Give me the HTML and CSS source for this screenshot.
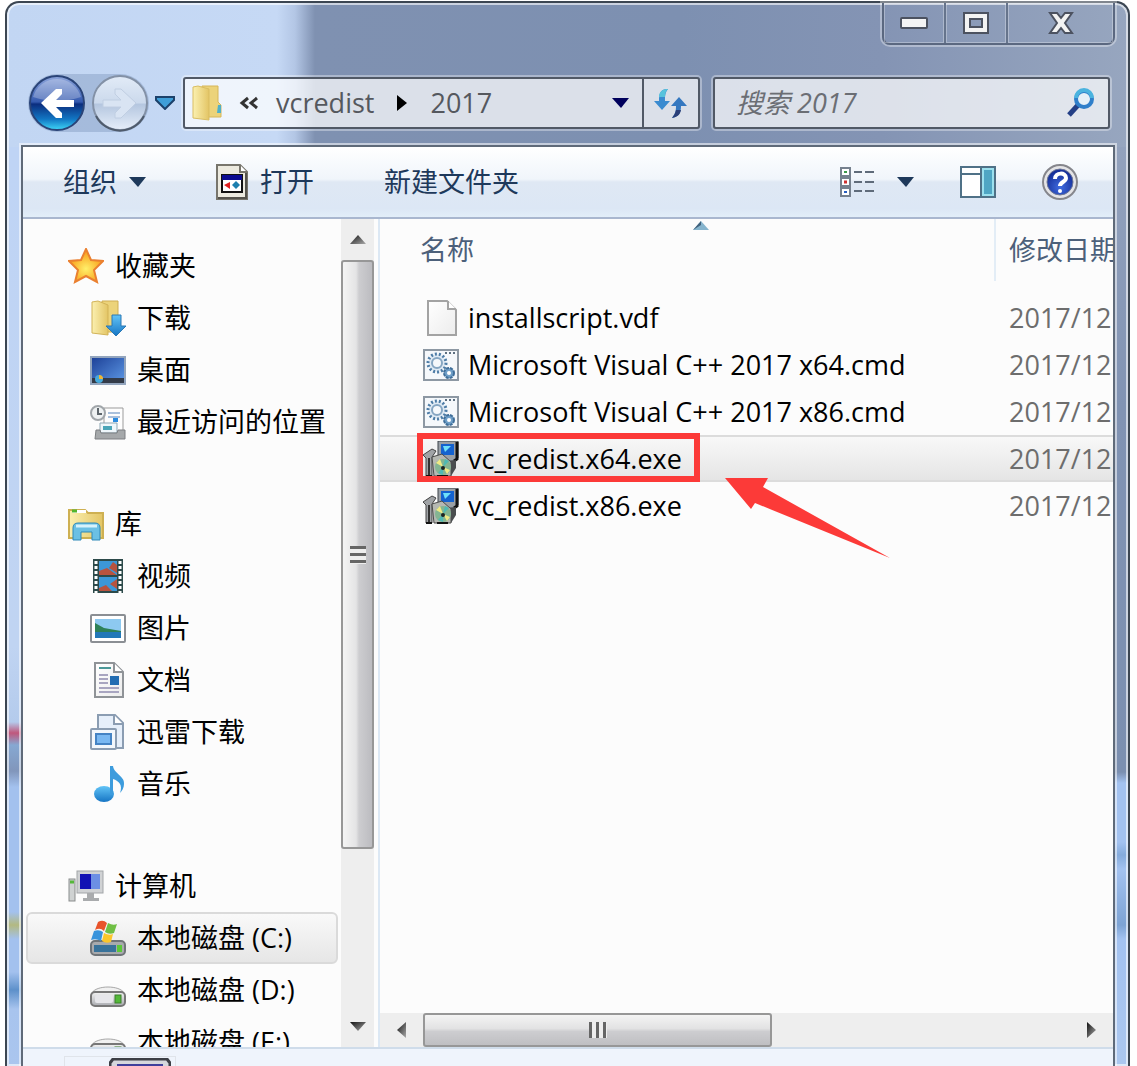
FILE: index.html
```html
<!DOCTYPE html>
<html lang="zh-CN">
<head>
    <meta charset="UTF-8">
    <meta name="viewport" content="width=device-width, initial-scale=1.0">
    <title>2017</title>
    <link rel="stylesheet" href="styles.css">
</head>
<body>
    <svg class="defs" aria-hidden="true">
        <defs>
            <linearGradient id="gFolder" x1="0" y1="0" x2="1" y2="0">
                <stop offset="0" stop-color="#fbf0b0"/><stop offset="1" stop-color="#e3c565"/>
            </linearGradient>
            <linearGradient id="gBlue" x1="0" y1="0" x2="0" y2="1">
                <stop offset="0" stop-color="#62c4f7"/><stop offset="1" stop-color="#1675c4"/>
            </linearGradient>
            <linearGradient id="gGrey" x1="0" y1="0" x2="0" y2="1">
                <stop offset="0" stop-color="#f4f4f4"/><stop offset="1" stop-color="#a9abb0"/>
            </linearGradient>
            <linearGradient id="gScreen" x1="0" y1="0" x2="1" y2="1">
                <stop offset="0" stop-color="#1c3f96"/><stop offset="1" stop-color="#5f9be8"/>
            </linearGradient>
            <linearGradient id="gPaper" x1="0" y1="0" x2="1" y2="1">
                <stop offset="0" stop-color="#ffffff"/><stop offset="1" stop-color="#ececec"/>
            </linearGradient>
            <linearGradient id="gBack" x1="0" y1="0" x2="0" y2="1">
                <stop offset="0" stop-color="#8ea6dc"/><stop offset=".48" stop-color="#3459ae"/>
                <stop offset=".52" stop-color="#0b2d7e"/><stop offset=".8" stop-color="#1277c4"/><stop offset="1" stop-color="#3fd8f8"/>
            </linearGradient>
            <linearGradient id="gFwd" x1="0" y1="0" x2="0" y2="1">
                <stop offset="0" stop-color="#e2ebf7"/><stop offset=".5" stop-color="#cbd9ec"/>
                <stop offset=".52" stop-color="#b4c6df"/><stop offset="1" stop-color="#e6eefa"/>
            </linearGradient>
            <linearGradient id="gArrow" x1="0" y1="0" x2="1" y2="1">
                <stop offset="0" stop-color="#111111"/><stop offset="1" stop-color="#aaaaaa"/>
            </linearGradient>
            <radialGradient id="gHelp" cx=".5" cy=".7" r=".6">
                <stop offset="0" stop-color="#3f6be0"/><stop offset="1" stop-color="#16309a"/>
            </radialGradient>
            <radialGradient id="gStar" cx=".5" cy=".6" r=".5">
                <stop offset="0" stop-color="#fff06a"/><stop offset="1" stop-color="#f9a11d"/>
            </radialGradient>
        </defs>
        <symbol id="cmd" viewBox="0 0 36 36">
            <rect x="1" y="3" width="34" height="30" fill="#f5f8fb" stroke="#8d98a3" stroke-width="2"/>
            <path d="M22 6h2M26 6h2M30 6h2" stroke="#5d6f80" stroke-width="2"/>
            <circle cx="14" cy="16" r="9" fill="#dfeaf4" stroke="#4d7ca6" stroke-width="3" stroke-dasharray="2 2"/>
            <circle cx="14" cy="16" r="5" fill="#f5f8fb" stroke="#86a6c2" stroke-width="2"/>
            <circle cx="26" cy="26" r="5" fill="#6f9fc8" stroke="#3f6e99" stroke-width="2" stroke-dasharray="3 1"/>
            <circle cx="26" cy="26" r="2" fill="#fff"/>
        </symbol>
        <symbol id="setup" viewBox="0 0 36 36">
            <path d="M15 0h20v17l-4 3H15z" fill="#9aa0a6" stroke="#3c4248" stroke-width="1"/>
            <path d="M34 1v17l-3 2" fill="none" stroke="#111" stroke-width="3"/>
            <rect x="18" y="3" width="13" height="11" fill="#1462cf"/>
            <path d="M20 5h8l-6 6z" fill="#6ee0fa"/>
            <path d="M0 14l9-6 4 2-4 6v19H3V17z" fill="#a0a3a6" stroke="#444" stroke-width="1"/>
            <path d="M6 17v17" stroke="#333" stroke-width="2"/>
            <path d="M9 16l10-3 9 8v14H11z" fill="#b5b8b2" stroke="#4b4b4b" stroke-width="1"/>
            <circle cx="20" cy="26" r="8" fill="#84b592"/>
            <path d="M20 26l-7-4 4-4zM20 26l7 3-3 4z" fill="#f0e985"/>
            <path d="M20 26l-5 6 5 2zM20 26l2-8 4 2z" fill="#4fb9b3"/>
            <circle cx="20" cy="27" r="2" fill="#1d2320"/>
            <path d="M28 20l5-1v8l-5 8" fill="#4a4d4f"/>
            <path d="M3 35h6M14 35h11" stroke="#111" stroke-width="2"/>
        </symbol>
        <symbol id="drive" viewBox="0 0 36 36">
            <path d="M2 21c4-8 28-8 32 0z" fill="#f1f1f1" stroke="#a7a7a7" stroke-width="1"/>
            <rect x="1" y="20" width="34" height="14" rx="4" fill="url(#gGrey)" stroke="#777" stroke-width="2"/>
            <rect x="5" y="23" width="18" height="8" rx="2" fill="#e6e6ea"/>
            <rect x="25" y="23" width="6" height="8" fill="#53b838" stroke="#3b7e2a" stroke-width="1"/>
        </symbol>
    </svg>

    <div class="window">
        <div class="controls">
            <button aria-label="最小化"><svg width="28" height="12" viewBox="0 0 28 12"><rect x="1" y="1" width="26" height="10" rx="1" fill="#f3f3f3" stroke="#4c5260" stroke-width="2"/></svg></button>
            <button aria-label="最大化"><svg width="28" height="22" viewBox="0 0 28 22"><path fill-rule="evenodd" d="M2 1h24v20H2zM8 7v8h12V7z" fill="#f3f3f3" stroke="#4c5260" stroke-width="2"/></svg></button>
            <button class="close" aria-label="关闭"><svg width="26" height="22" viewBox="0 0 26 22"><path d="M2 1h7l4 5 4-5h7l-7 10 7 10h-7l-4-5-4 5H2l7-10z" fill="#f3f3f3" stroke="#4c5260" stroke-width="2"/></svg></button>
        </div>

        <div class="nav">
            <div class="pod">
                <button aria-label="后退"><svg width="58" height="58" viewBox="0 0 58 58">
                    <circle cx="29" cy="29" r="27" fill="url(#gBack)" stroke="#2a4478" stroke-width="2"/>
                    <path d="M5 23A25 25 0 0 1 53 23Q29 31 5 23z" fill="#fff" opacity=".25"/>
                    <path d="M13 29L28 15h6v5l-6 6h18v7H28l6 6v5h-6z" fill="#fff"/>
                </svg></button>
                <button aria-label="前进"><svg width="58" height="58" viewBox="0 0 58 58">
                    <circle cx="29" cy="29" r="27" fill="url(#gFwd)" stroke="#8391a6" stroke-width="2"/>
                    <path d="M5 42A27 27 0 0 0 53 42" fill="none" stroke="#4f5b6c" stroke-width="2"/>
                    <path d="M45 29L30 15h-6v5l6 6H12v7h18l-6 6v5h6z" fill="#d9e4f3" stroke="#c0cee2" stroke-width="1"/>
                </svg></button>
            </div>
            <button class="recent" aria-label="最近的页面"><svg width="20" height="14" viewBox="0 0 20 14"><path d="M1 1h18v3l-9 9-9-9z" fill="#3f9ed8" stroke="#1c416b" stroke-width="2"/></svg></button>

            <div class="address">
                <svg class="folder" width="30" height="36" viewBox="0 0 30 36">
                    <path d="M10 1h16v16l3 3v12H10z" fill="#ecd37a" stroke="#d6b658" stroke-width="1"/>
                    <path d="M1 2l5-1 11 3v31L1 33z" fill="url(#gFolder)" stroke="#d9bd62" stroke-width="1"/>
                    <path d="M26 20h3v8h-4z" fill="#4fb0c8"/>
                </svg>
                <svg class="chevrons" width="20" height="14" viewBox="0 0 20 14"><path d="M9 2L3 7l6 5M18 2l-6 5 6 5" fill="none" stroke="#333" stroke-width="3"/></svg>
                <a href="#">vcredist</a>
                <svg width="10" height="18" viewBox="0 0 10 18"><path d="M0 1l10 8-10 8z" fill="#000"/></svg>
                <a href="#">2017</a>
                <button class="history" aria-label="以前的位置"><svg width="17" height="10" viewBox="0 0 17 10"><path d="M0 0h17L9 10z" fill="#00005c"/></svg></button>
                <button class="refresh" aria-label="刷新"><svg width="34" height="32" viewBox="0 0 34 32">
                    <path d="M12 2C6 3 5 7 5 14H0l8 9 8-9h-5c0-5 0-8 3-12z" fill="#3a8bd0"/>
                    <path d="M12 2C7 3 5 6 5 10h6c0-4 1-6 3-8z" fill="#58c3dc"/>
                    <path d="M18 31c6-1 9-4 9-12h6l-8-9-8 9h5c0 6-1 8-4 12z" fill="#3578c0"/>
                    <path d="M18 31c5-1 8-3 9-8h-5c-1 4-2 5-4 8z" fill="#2b3f78"/>
                </svg></button>
            </div>

            <div class="search">
                <input type="text" placeholder="搜索 2017" aria-label="搜索 2017">
                <svg width="28" height="30" viewBox="0 0 28 30">
                    <path d="M2 27l10-11" stroke="#243f86" stroke-width="5"/>
                    <circle cx="17" cy="11" r="8" fill="#e5f0f8" stroke="#2f7fca" stroke-width="4"/>
                    <path d="M9 10a8 8 0 0 1 16 0" fill="none" stroke="#4ab3df" stroke-width="4"/>
                </svg>
            </div>
        </div>

        <div class="client">
            <div class="toolbar">
                <button>组织 <svg width="17" height="10" viewBox="0 0 17 10"><path d="M0 0h17L9 10z" fill="#1e395b"/></svg></button>
                <button>
                    <svg width="32" height="36" viewBox="0 0 32 36">
                        <path d="M1 1h23l7 7v27H1z" fill="#eceadf" stroke="#77756c" stroke-width="2"/>
                        <path d="M24 1v7h7" fill="#fff" stroke="#77756c" stroke-width="2"/>
                        <path d="M30 9v25H2" fill="none" stroke="#55534c" stroke-width="2"/>
                        <rect x="6" y="11" width="20" height="17" fill="#fff" stroke="#111" stroke-width="2"/>
                        <rect x="6" y="11" width="20" height="5" fill="#0b0b90"/>
                        <path d="M14 18v7l-6-4z" fill="#e02020"/><path d="M20 17l4 4-4 4-4-4z" fill="#1c7fae"/>
                    </svg>
                    打开
                </button>
                <button>新建文件夹</button>
                <div class="tools">
                    <button class="views" aria-label="更改您的视图">
                        <svg width="34" height="30" viewBox="0 0 34 30">
                            <path d="M1 1h9v8H1zM1 11h9v8H1zM1 21h9v8H1z" fill="#fff" stroke="#76818e" stroke-width="2"/>
                            <path d="M4 5h3" stroke="#3c9a4a" stroke-width="2"/><path d="M4 15h3" stroke="#d03030" stroke-width="3"/><path d="M4 25h3" stroke="#2a5fc0" stroke-width="2"/>
                            <path d="M14 5h8M25 5h9M14 15h8M25 15h9M14 24h8M25 24h9" stroke="#5f6b7a" stroke-width="2"/>
                        </svg>
                        <svg width="17" height="10" viewBox="0 0 17 10"><path d="M0 0h17L9 10z" fill="#1e395b"/></svg>
                    </button>
                    <button aria-label="显示预览窗格"><svg width="36" height="32" viewBox="0 0 36 32">
                        <rect x="1" y="1" width="34" height="30" fill="#fff" stroke="#4f7187" stroke-width="2"/>
                        <path d="M2 8h19M21 1v30" stroke="#4f7187" stroke-width="2"/>
                        <rect x="23" y="3" width="10" height="26" fill="#4fa6c4" stroke="#9be0ee" stroke-width="2"/>
                    </svg></button>
                    <button aria-label="获取帮助"><svg width="36" height="36" viewBox="0 0 36 36">
                        <circle cx="18" cy="18" r="17" fill="#e4e4e6" stroke="#85868c" stroke-width="2"/>
                        <circle cx="18" cy="18" r="13" fill="url(#gHelp)" stroke="#6c7696" stroke-width="1"/>
                        <path d="M13 15c0-7 11-7 11-1 0 4-6 4-6 8" fill="none" stroke="#fff" stroke-width="4"/>
                        <circle cx="18" cy="27" r="2" fill="#fff"/>
                    </svg></button>
                </div>
            </div>

            <div class="content">
                <nav class="sidebar">
                    <ul>
                        <li><a href="#"><svg viewBox="0 0 36 36"><path d="M18 1l5 11 12 1-9 9 3 12-11-6-11 6 3-12-9-9 12-1z" fill="url(#gStar)" stroke="#ea8030" stroke-width="2"/></svg>收藏夹</a></li>
                        <li class="child"><a href="#"><svg viewBox="0 0 36 36"><path d="M12 1h16v31H12z" fill="#ecd37a" stroke="#cfae53"/><path d="M2 2l6-1 10 4v30L2 33z" fill="url(#gFolder)" stroke="#d2b357"/><path d="M22 15h9v11h5l-10 10-10-10h6z" fill="url(#gBlue)" stroke="#2b78b4"/></svg>下载</a></li>
                        <li class="child"><a href="#"><svg viewBox="0 0 36 36"><rect x="1" y="5" width="34" height="27" fill="url(#gScreen)" stroke="#93a5bd" stroke-width="2"/><path d="M2 26h32v5H2z" fill="#333b48"/><circle cx="9" cy="27" r="4" fill="#45a9dc"/><path d="M9 23a4 4 0 0 1 4 4H9z" fill="#f2b531"/></svg>桌面</a></li>
                        <li class="child"><a href="#"><svg viewBox="0 0 36 36"><path d="M14 4h19v24H14z" fill="#fdfdfd" stroke="#9b9b9b"/><path d="M18 9h12M18 13h12" stroke="#a9c0dc" stroke-width="2"/><path d="M23 14h5v4h-5z" fill="#2b8be0"/><path d="M10 19h17v10H10z" fill="#eff7fb" stroke="#8da7b5"/><path d="M13 22h9v4h-9z" fill="#4aa5b8"/><path d="M6 26h4l1 3h16l1-3h7v9H5z" fill="#a5a8aa" stroke="#7c7f82"/><circle cx="8" cy="9" r="7" fill="#eef1f2" stroke="#a1a6aa" stroke-width="2"/><path d="M8 4v6h4" fill="none" stroke="#5e666c" stroke-width="2"/></svg>最近访问的位置</a></li>
                    </ul>
                    <ul>
                        <li><a href="#"><svg viewBox="0 0 36 36"><path d="M1 4h16l3 3h15v25H1z" fill="url(#gFolder)" stroke="#ceb052" stroke-width="2"/><path d="M4 4h14v3H4z" fill="#fff"/><path d="M4 5h5" stroke="#54b52c" stroke-width="3"/><path d="M5 34V22q0-5 5-5h17q5 0 5 5v12h-8v-8H13v8z" fill="#6bc0e4" stroke="#3189b8"/><path d="M8 20h21" stroke="#d7f2fc" stroke-width="3"/></svg>库</a></li>
                        <li class="child"><a href="#"><svg viewBox="0 0 36 36"><path d="M3 1h30v34H3z" fill="#2d4a4a"/><path d="M9 3h18v14H9zM9 19h18v14H9z" fill="#3c97d8"/><path d="M9 13l8-3 10 7H9zM19 10l4-6 4 3v8zM9 30l7-3 6 6H9zM20 26l7-5v10z" fill="#b8533f"/><path d="M6 3v32M30 3v32" stroke="#fff" stroke-width="3" stroke-dasharray="3 2"/></svg>视频</a></li>
                        <li class="child"><a href="#"><svg viewBox="0 0 36 36"><rect x="1" y="5" width="34" height="27" rx="1" fill="#fff" stroke="#8b8f94" stroke-width="2"/><path d="M5 9h26v19H5z" fill="#8dc9f0"/><path d="M5 13l9 5 17 3v2H5z" fill="#2e8157"/><path d="M5 22h26v6H5z" fill="#2378b8"/></svg>图片</a></li>
                        <li class="child"><a href="#"><svg viewBox="0 0 36 36"><path d="M5 1h19l9 9v25H5z" fill="url(#gPaper)" stroke="#8f9397" stroke-width="2"/><path d="M24 1v9h9" fill="#fff" stroke="#8f9397" stroke-width="2"/><path d="M9 6h12" stroke="#4b9898" stroke-width="2"/><path d="M9 13h9M9 17h9M9 21h9M9 26h20M9 30h20" stroke="#a8a5c0" stroke-width="2"/><path d="M20 14h9v9h-9z" fill="#236db2"/></svg>文档</a></li>
                        <li class="child"><a href="#"><svg viewBox="0 0 36 36"><path d="M8 1h17l8 8v25H8z" fill="#e6effa" stroke="#8b9db2" stroke-width="2"/><path d="M24 1v9h9" fill="#fff" stroke="#8b9db2" stroke-width="2"/><rect x="1" y="15" width="25" height="20" rx="1" fill="#f2f7fc" stroke="#8b9db2" stroke-width="2"/><rect x="6" y="20" width="15" height="10" fill="#79b8f2" stroke="#4483c4" stroke-width="2"/></svg>迅雷下载</a></li>
                        <li class="child"><a href="#"><svg viewBox="0 0 36 36"><ellipse cx="14" cy="28" rx="10" ry="8" fill="url(#gBlue)"/><path d="M20 0h3c1 8 12 10 11 18 0 4-2 7-4 9 3-8-1-12-7-14v16h-3z" fill="#3d9cdd"/></svg>音乐</a></li>
                    </ul>
                    <ul>
                        <li><a href="#"><svg viewBox="0 0 36 36"><rect x="9" y="3" width="26" height="22" fill="#d0d2d4" stroke="#a2a5a8" stroke-width="1"/><path d="M12 6h20v15H12z" fill="#1212b4"/><path d="M23 6h9v15h-9z" fill="#6c8fe4"/><path d="M19 25h7v5h5v3H15v-3h4z" fill="#a9abad"/><rect x="1" y="11" width="6" height="22" fill="#cfd2d2" stroke="#8a8d8d"/><path d="M2 14h4" stroke="#55b83a" stroke-width="3"/></svg>计算机</a></li>
                        <li class="child current"><a href="#"><svg viewBox="0 0 36 36"><rect x="1" y="21" width="34" height="14" rx="4" fill="#a8aaad" stroke="#6f7478" stroke-width="2"/><rect x="4" y="25" width="22" height="7" fill="#38729a"/><rect x="27" y="25" width="5" height="7" fill="#5bc838"/><path d="M8 2q5-3 9 1l-3 8q-4-4-9-1z" fill="#e8532b"/><path d="M18 3q5 3 9 1l-3 9q-5 2-9-1z" fill="#6fbf44"/><path d="M4 11q5-2 9 1l-2 9q-5-3-10-1z" fill="#3893dc"/><path d="M14 13q5 3 9 1l-2 8q-5 2-9-1z" fill="#fbc62b"/></svg>本地磁盘 (C:)</a></li>
                        <li class="child"><a href="#"><svg><use href="#drive"/></svg>本地磁盘 (D:)</a></li>
                        <li class="child"><a href="#"><svg><use href="#drive"/></svg>本地磁盘 (E:)</a></li>
                    </ul>
                </nav>

                <div class="scrollbar vertical">
                    <button aria-label="向上滚动"><svg width="16" height="9" viewBox="0 0 16 9"><path d="M8 0l8 9H0z" fill="url(#gArrow)"/></svg></button>
                    <div class="track"><div class="thumb"><span class="grip"></span></div></div>
                    <button aria-label="向下滚动"><svg width="16" height="9" viewBox="0 0 16 9"><path d="M0 0h16L8 9z" fill="url(#gArrow)"/></svg></button>
                </div>

                <main class="files">
                    <table>
                        <thead>
                            <tr>
                                <th scope="col">名称<svg class="sort" width="16" height="9" viewBox="0 0 16 9"><path d="M8 0l8 9H0z" fill="#86b4cd"/><path d="M8 0v4L0 9z" fill="#41617c"/></svg></th>
                                <th scope="col" class="date">修改日期</th>
                            </tr>
                        </thead>
                        <tbody>
                            <tr>
                                <td><div class="name"><svg viewBox="0 0 36 36"><path d="M5 1h19l9 9v25H5z" fill="url(#gPaper)" stroke="#a3a3a3" stroke-width="2"/><path d="M25 1v8h8" fill="#fff" stroke="#a3a3a3" stroke-width="2"/></svg>installscript.vdf</div></td>
                                <td class="date">2017/12</td>
                            </tr>
                            <tr>
                                <td><div class="name"><svg><use href="#cmd"/></svg>Microsoft Visual C++ 2017 x64.cmd</div></td>
                                <td class="date">2017/12</td>
                            </tr>
                            <tr>
                                <td><div class="name"><svg><use href="#cmd"/></svg>Microsoft Visual C++ 2017 x86.cmd</div></td>
                                <td class="date">2017/12</td>
                            </tr>
                            <tr class="selected">
                                <td>
                                    <div class="name"><svg><use href="#setup"/></svg>vc_redist.x64.exe</div>
                                    <span class="mark"></span>
                                    <svg class="arrow" width="166" height="84" viewBox="0 0 166 84"><path d="M0 1h43l-5 9 127 71L30 26l-4 6z" fill="#fc3a38"/></svg>
                                </td>
                                <td class="date">2017/12</td>
                            </tr>
                            <tr>
                                <td><div class="name"><svg><use href="#setup"/></svg>vc_redist.x86.exe</div></td>
                                <td class="date">2017/12</td>
                            </tr>
                        </tbody>
                    </table>

                    <div class="scrollbar horizontal">
                        <button aria-label="向左滚动"><svg width="9" height="16" viewBox="0 0 9 16"><path d="M9 0v16L0 8z" fill="url(#gArrow)"/></svg></button>
                        <div class="track"><div class="thumb"><span class="grip"></span></div></div>
                        <button aria-label="向右滚动"><svg width="9" height="16" viewBox="0 0 9 16"><path d="M0 0l9 8-9 8z" fill="url(#gArrow)"/></svg></button>
                    </div>
                </main>
            </div>

            <div class="details">
                <div class="preview"><svg width="62" height="48" viewBox="0 0 62 48"><path d="M4 1h54l3 4v43H1V5z" fill="#d5d7dc" stroke="#3d3f46" stroke-width="3"/><rect x="8" y="6" width="46" height="42" fill="#3f3f9c"/></svg></div>
            </div>
        </div>
    </div>
</body>
</html>
```
FILE: styles.css
```css
* {
    box-sizing: border-box;
}

body {
    margin: 0;
    padding: 1px 7px 0 5px;
    height: 100vh;
    overflow: hidden;
    background-color: #fff;
    font-family: "Open Sans", "Noto Sans CJK SC", sans-serif;
    font-size: 27px;
    line-height: 36px;
    color: #000;
}

.defs {
    position: absolute;
    width: 0;
    height: 0;
}

svg {
    display: block;
    flex: none;
}

button {
    display: flex;
    align-items: center;
    justify-content: center;
    padding: 0;
    border: none;
    background: none;
    font: inherit;
    color: inherit;
    cursor: pointer;
}

a {
    color: inherit;
    text-decoration: none;
}

/* glass frame */
.window {
    display: flex;
    flex-direction: column;
    height: 100%;
    border: 2px solid #3c4652;
    border-bottom: none;
    border-radius: 14px 14px 0 0;
    box-shadow: inset 0 0 0 2px rgba(255, 255, 255, 0.6);
    background-image:
        linear-gradient(to right, #c2d6f3 0, #c6d9f5 270px, #b3c6e5 288px, #7f91b1 308px, #7d90b1 60%, #8494b4 78%, #97a6bf 100%),
        linear-gradient(to bottom, #bfd4f5 0, #c0d4f2 500px, #b4cbec 575px, #c0577c 586px, #86a8d2 598px, #8196bb 624px, #a3c1ee 640px, #a3c1ee 765px, #b3b981 778px, #a3c1ee 792px, #a3c1ee 825px, #5d90ca 843px, #a8c4ee 862px, #b0c9ef 100%),
        linear-gradient(to bottom, #93a2bd 0, #8193b3 260px, #7b8fb0 625px, #a3c2f0 636px, #a3c2f0 695px, #85abdc 708px, #a3c2f0 722px, #7da3d4 778px, #a3c2f0 792px, #b5cdee 100%);
    background-repeat: no-repeat;
    background-size: 100% 144px, 50% 100%, 50% 100%;
    background-position: 0 0, 0 144px, 100% 144px;
}

.controls {
    display: flex;
    align-self: flex-end;
    height: 42px;
    margin-right: 13px;
    border: 2px solid #5b6880;
    border-top: none;
    border-radius: 0 0 8px 8px;
    box-shadow: 0 0 0 2px rgba(255, 255, 255, 0.35);
}

.controls button {
    width: 62px;
    border-right: 2px solid #66748c;
    box-shadow: inset 0 0 0 1px rgba(255, 255, 255, 0.3);
}

.controls .close {
    width: 105px;
    border-right: none;
}

.nav {
    display: flex;
    align-items: center;
    padding: 29px 18px 13px 21px;
}

.pod {
    display: flex;
    gap: 5px;
    width: 121px;
    border-radius: 29px;
    background-color: rgba(110, 135, 175, 0.35);
}

.recent {
    margin: 0 8px 0 6px;
}

.address,
.search {
    display: flex;
    align-items: center;
    height: 52px;
    border: 2px solid #515966;
    border-radius: 3px;
    background-color: rgba(255, 255, 255, 0.72);
    box-shadow: 0 0 0 2px rgba(255, 255, 255, 0.35);
    color: #55585e;
}

.address {
    flex: 4;
}

.folder {
    margin-left: 7px;
}

.chevrons {
    margin: 0 17px;
}

.address a + svg {
    margin: 0 23px;
}

.history {
    height: 100%;
    margin-left: auto;
    padding: 0 13px;
}

.refresh {
    width: 56px;
    height: 100%;
    border-left: 2px solid #515966;
}

.search {
    flex: 3;
    margin-left: 13px;
}

.search input {
    flex: 1;
    min-width: 0;
    padding: 0 0 0 21px;
    border: none;
    background: none;
    font: inherit;
    font-style: italic;
}

.search input::placeholder {
    color: #6b6e74;
    opacity: 1;
}

.search svg {
    margin-right: 13px;
}

.client {
    display: flex;
    flex: 1;
    flex-direction: column;
    min-height: 0;
    margin: 0 13px 0 14px;
    border: 2px solid #5f6a79;
    border-bottom: none;
    box-shadow: 0 0 0 2px rgba(255, 255, 255, 0.55);
    background-color: #fcfcfc;
}

.toolbar {
    display: flex;
    flex: none;
    align-items: center;
    gap: 70px;
    height: 72px;
    padding: 0 35px 0 40px;
    border-bottom: 2px solid #a9b7cf;
    background-image: linear-gradient(to bottom, #fff 0, #f0f5fb 46%, #dfe8f4 50%, #dce7f5 88%, #e2eef9 100%);
    color: #1e395b;
}

.toolbar button {
    gap: 12px;
}

.tools {
    display: flex;
    align-items: center;
    gap: 46px;
    margin-left: auto;
}

.toolbar .views {
    gap: 23px;
}

.content {
    display: flex;
    flex: 1;
    min-height: 0;
}

.sidebar {
    width: 318px;
    flex: none;
    overflow: hidden;
    padding: 21px 3px 0;
}

.sidebar ul {
    margin: 0 0 50px;
    padding: 0;
    list-style: none;
}

.sidebar a {
    display: flex;
    align-items: center;
    gap: 11px;
    height: 52px;
    padding-left: 40px;
    border: 2px solid transparent;
    border-radius: 6px;
    white-space: nowrap;
}

.sidebar .child a {
    padding-left: 62px;
}

.sidebar svg,
.name svg {
    width: 36px;
    height: 36px;
}

.sidebar .current a {
    border-color: #dadada;
    background-image: linear-gradient(to bottom, #f9f9f9, #e6e6e6);
}

.scrollbar {
    display: flex;
    flex: none;
    background-color: #eeeeee;
}

.track {
    flex: 1;
}

.thumb {
    display: flex;
    align-items: center;
    justify-content: center;
    border: 2px solid #979797;
    border-radius: 3px;
}

.vertical {
    flex-direction: column;
    width: 33px;
}

.vertical button {
    height: 41px;
}

.vertical .thumb {
    height: 79%;
    background-image: linear-gradient(to right, #f4f4f4 0, #e4e4e5 45%, #cdcdd0 55%, #bcbcc0 100%);
}

.vertical .grip {
    width: 16px;
    height: 18px;
    background-image: repeating-linear-gradient(to bottom, #666 0, #666 3px, #eee 3px, #eee 7px);
}

.horizontal {
    height: 34px;
}

.horizontal button {
    width: 43px;
}

.horizontal .thumb {
    width: 54%;
    height: 100%;
    background-image: linear-gradient(to bottom, #f4f4f4 0, #e2e2e3 45%, #cdcdd0 55%, #bfbfc2 100%);
}

.horizontal .grip {
    width: 18px;
    height: 16px;
    background-image: repeating-linear-gradient(to right, #666 0, #666 3px, #eee 3px, #eee 7px);
}

.files {
    display: flex;
    flex: 1;
    flex-direction: column;
    justify-content: space-between;
    min-width: 0;
    margin-left: 4px;
    border-left: 2px solid #dce8f4;
}

.files table {
    width: 100%;
    table-layout: fixed;
    border-spacing: 0;
}

.files th {
    position: relative;
    height: 62px;
    padding: 0 0 0 40px;
    font-weight: normal;
    text-align: left;
    color: #4c607a;
}

/* space between the header and the first file */
.files thead::after {
    content: "";
    display: block;
    height: 13px;
}

.files .date {
    width: 119px;
    padding-left: 13px;
    overflow: hidden;
    white-space: nowrap;
}

.files th.date {
    border-left: 2px solid #e3edf6;
}

.sort {
    position: absolute;
    top: 2px;
    left: 51%;
}

.files td {
    position: relative;
    height: 47px;
    padding: 0 0 0 43px;
}

.files td.date {
    padding-left: 15px;
    color: #6d6d6d;
}

.name {
    display: flex;
    align-items: center;
    gap: 9px;
    white-space: nowrap;
}

.selected td {
    border-top: 2px solid #dcdcdc;
    border-bottom: 2px solid #dcdcdc;
    background-image: linear-gradient(to bottom, #f8f8f8, #e5e5e5);
}

/* red annotation over the selected file */
.mark {
    position: absolute;
    top: -4px;
    left: 37px;
    width: 283px;
    height: 49px;
    border: 6px solid #fc3a38;
}

.arrow {
    position: absolute;
    z-index: 1;
    top: 40px;
    left: 345px;
}

.details {
    flex: none;
    height: 19px;
    padding: 7px 41px 0;
    overflow: hidden;
    border-top: 2px solid #cfdcea;
    background-color: #eff4fc;
}

.preview {
    width: 112px;
    padding: 1px 0 0 44px;
    border: 1px solid #e0e4ea;
}
```
